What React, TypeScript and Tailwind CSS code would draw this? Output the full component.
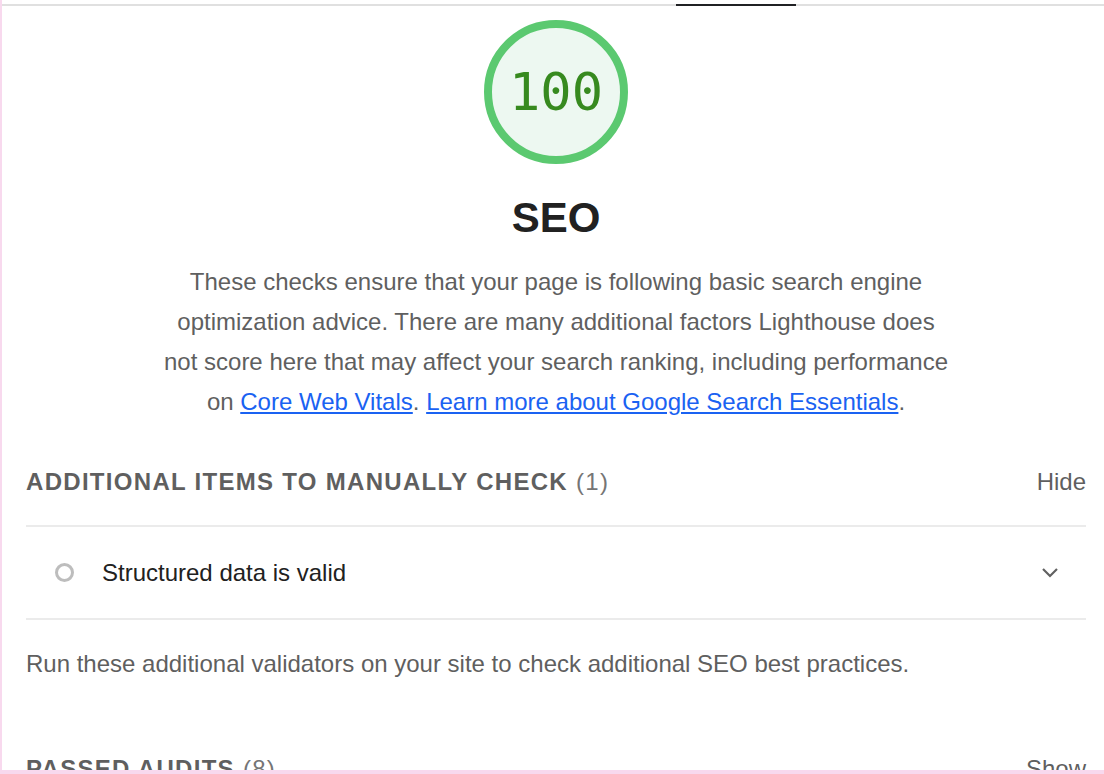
export default function App() {
  return (
    <div
      className="flex h-[774px] w-[1104px] flex-col overflow-hidden bg-white text-[#212121]"
      style={{ fontFamily: '"Liberation Sans", Arial, sans-serif' }}
    >
      <div className="flex min-h-0 flex-1 overflow-hidden border-l-2 border-[#f8d9ee]">
        <div className="min-w-0 flex-1">
          {/* tab strip */}
          <div className="mt-[4px] flex h-[2px] bg-[#e0e0e0]">
            <div className="w-[674px] shrink-0" />
            <div className="w-[120px] shrink-0 bg-[#202124]" />
          </div>

          {/* category header */}
          <div className="flex flex-col items-center pl-[24px] pr-[18px]">
            <svg className="mt-[13px]" width="146" height="146" viewBox="0 0 146 146">
              <circle cx="73" cy="73" r="68" fill="#edf8f1" stroke="#5bc970" strokeWidth="8" />
              <text
                x="73"
                y="91"
                textAnchor="middle"
                fill="#378a1f"
                fontSize="52"
                fontFamily='"DejaVu Sans Mono", "Liberation Mono", monospace'
              >
                100
              </text>
            </svg>
            <h1 className="mt-[32px] text-[42px] font-bold leading-none text-[#212121]">SEO</h1>
            <p className="mt-[23px] w-[794px] text-center text-[24px] leading-[40px] text-[#5f5f5f]">
              These checks ensure that your page is following basic search engine optimization
              advice. There are many additional factors Lighthouse does not score here that may
              affect your search ranking, including performance on{" "}
              <a className="text-[#1a62f2] underline underline-offset-2">Core Web Vitals</a>.{" "}
              <a className="text-[#1a62f2] underline underline-offset-2">
                Learn more about Google Search Essentials
              </a>
              .
            </p>
          </div>

          {/* manual checks */}
          <div className="mt-[45px] pl-[24px] pr-[18px]">
            <div className="flex items-center justify-between pb-[28px]">
              <div className="text-[24px] leading-[30px] tracking-[1.3px] text-[#5f5f5f]">
                <span className="font-bold">ADDITIONAL ITEMS TO MANUALLY CHECK</span>{" "}
                <span className="text-[#757575]">(1)</span>
              </div>
              <span className="text-[24px] leading-[30px] text-[#5f5f5f]">Hide</span>
            </div>
            <div className="border-t-2 border-[#ebebeb]" />
            <div className="flex h-[91px] items-center">
              <div className="flex w-[76px] justify-center">
                <div className="h-[19px] w-[19px] rounded-full border-[3.5px] border-[#bdbdbd]" />
              </div>
              <span className="flex-1 text-[24px] text-[#212121]">Structured data is valid</span>
              <svg className="mr-[27px]" width="18" height="12" viewBox="0 0 18 12">
                <polyline
                  points="2,2 9,9 16,2"
                  fill="none"
                  stroke="#616161"
                  strokeWidth="2.2"
                />
              </svg>
            </div>
            <div className="border-t-2 border-[#ebebeb]" />
            <p className="mt-[29px] text-[24px] leading-[30px] text-[#5f5f5f]">
              Run these additional validators on your site to check additional SEO best practices.
            </p>

            <div className="mt-[75px] flex items-center justify-between">
              <div className="text-[24px] leading-[30px] tracking-[1.3px] text-[#5f5f5f]">
                <span className="font-bold">PASSED AUDITS</span>{" "}
                <span className="text-[#757575]">(8)</span>
              </div>
              <span className="text-[24px] leading-[30px] text-[#5f5f5f]">Show</span>
            </div>
          </div>
        </div>
      </div>
      <div className="h-[4px] shrink-0 bg-[#f8d9ee]" />
    </div>
  );
}
